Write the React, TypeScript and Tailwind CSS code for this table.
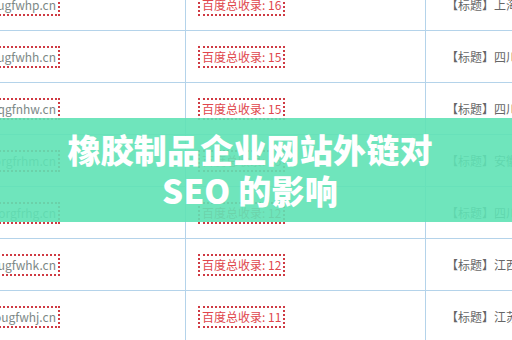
const rows = [
  { domain: 'ougfwhp.cn', count: 16, title: '上海' },
  { domain: 'ougfwhh.cn', count: 15, title: '四川' },
  { domain: 'oqgfnhw.cn', count: 15, title: '四川' },
  { domain: 'orgfrhm.cn', count: 15, title: '安徽' },
  { domain: 'orgfrhg.cn', count: 12, title: '四川' },
  { domain: 'ougfwhk.cn', count: 12, title: '江西' },
  { domain: 'ougfwhj.cn', count: 11, title: '江苏' },
]

const cellFont = { fontFamily: '"Microsoft YaHei", "Noto Sans CJK SC", "Liberation Sans", sans-serif' }

export default function App() {
  return (
    <div className="relative w-[512px] h-[340px] overflow-hidden bg-white" style={cellFont}>
      {/* table */}
      <div className="mt-[-21px]">
        {rows.map((row, i) => (
          <div key={i} className="flex h-[52px] border-b border-[#b4d3ea] text-[12px] leading-[18px]">
            <div className="w-[186px] shrink-0 flex items-center justify-end pr-[125px] border-r border-[#b4d3ea]">
              <span className="whitespace-nowrap border-2 border-dotted border-[#cf3a43] px-[2px] text-[#7d8987]">
                www.nqb{row.domain}
              </span>
            </div>
            <div className="w-[240px] shrink-0 flex items-center pl-[12px] border-r border-[#b4d3ea]">
              <span className="whitespace-nowrap border-2 border-dotted border-[#cf3a43] px-[2px] text-[#e0464c]">
                百度总收录: {row.count}
              </span>
            </div>
            <div className="flex-1 flex items-center pl-[20px] whitespace-nowrap text-[#666]">
              【标题】{row.title}市橡胶制品有限公司
            </div>
          </div>
        ))}
      </div>

      {/* overlay banner */}
      <div className="absolute left-0 right-0 top-[118px] h-[104px] flex items-center justify-center bg-[#5fe2b5]/90">
        <h1
          className="text-center text-white text-[33px] leading-[41px] font-black tracking-[0.2px] pr-[12px]"
          style={{ fontFamily: '"Noto Sans CJK SC", "Liberation Sans", sans-serif' }}
        >
          橡胶制品企业网站外链对
          <br />
          SEO 的影响
        </h1>
      </div>
    </div>
  )
}
